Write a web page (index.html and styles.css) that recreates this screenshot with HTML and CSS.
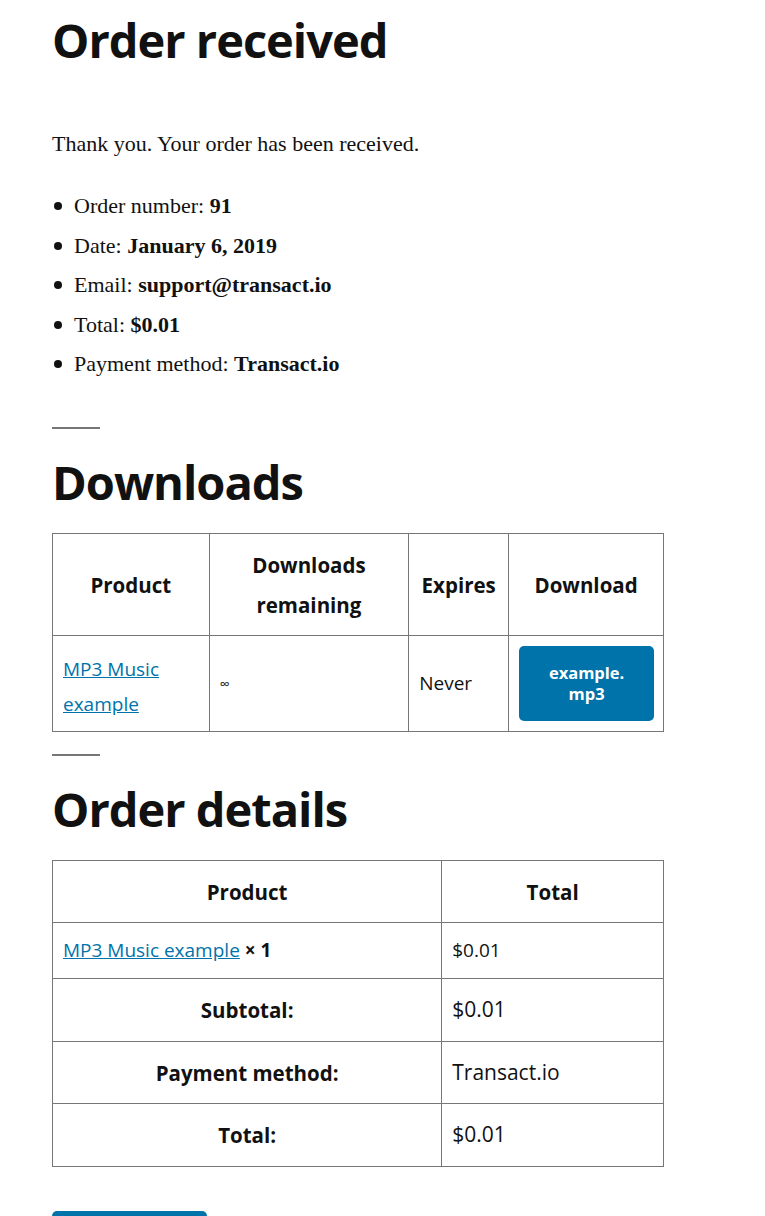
FILE: index.html
```html
<!DOCTYPE html>
<html lang="en">
<head>
<meta charset="utf-8">
<title>Order received</title>
<link rel="stylesheet" href="styles.css">
</head>
<body>
<main class="page">
  <h1 class="page-title">Order received</h1>
  <p class="thanks">Thank you. Your order has been received.</p>
  <ul class="overview">
    <li>Order number: <strong>91</strong></li>
    <li>Date: <strong>January 6, 2019</strong></li>
    <li>Email: <strong>support@transact.io</strong></li>
    <li>Total: <strong>$0.01</strong></li>
    <li>Payment method: <strong>Transact.io</strong></li>
  </ul>

  <hr class="sep sep-first">
  <h2 class="section-title">Downloads</h2>
  <table class="shop-table downloads">
    <colgroup>
      <col class="c-product"><col class="c-remaining"><col class="c-expires"><col class="c-download">
    </colgroup>
    <thead>
      <tr>
        <th>Product</th>
        <th>Downloads remaining</th>
        <th>Expires</th>
        <th>Download</th>
      </tr>
    </thead>
    <tbody>
      <tr>
        <td class="product-cell"><a href="#">MP3 Music example</a></td>
        <td class="infinity">∞</td>
        <td>Never</td>
        <td><a class="btn file-btn" href="#">example.<br>mp3</a></td>
      </tr>
    </tbody>
  </table>

  <hr class="sep">
  <h2 class="section-title">Order details</h2>
  <table class="shop-table details">
    <colgroup>
      <col class="c-name"><col class="c-total">
    </colgroup>
    <thead>
      <tr><th>Product</th><th>Total</th></tr>
    </thead>
    <tbody>
      <tr>
        <td><a href="#">MP3 Music example</a> <strong class="qty">× 1</strong></td>
        <td>$0.01</td>
      </tr>
    </tbody>
    <tfoot>
      <tr><th>Subtotal:</th><td>$0.01</td></tr>
      <tr><th>Payment method:</th><td>Transact.io</td></tr>
      <tr><th>Total:</th><td>$0.01</td></tr>
    </tfoot>
  </table>

  <div class="actions"><a class="btn again-btn" href="#">Order again</a></div>
</main>
</body>
</html>
```

FILE: styles.css
```css
html, body {
  margin: 0;
  padding: 0;
  background: #fff;
}

body {
  color: #111;
  font-family: "Liberation Serif", "Times New Roman", serif;
  font-size: 22px;
}

.page {
  width: 612px;
  padding: 0 0 0 52px;
}

.page-title,
.section-title {
  font-family: "Open Sans", "Noto Sans", sans-serif;
  font-weight: 700;
  color: #111;
  font-size: 47px;
  line-height: 64px;
  letter-spacing: -1px;
  margin: 0;
}

.page-title {
  padding-top: 8px;
}

.thanks {
  margin: 57px 0 0;
  line-height: 30px;
}

.overview {
  margin: 27px 0 0;
  padding: 0 0 0 22px;
  list-style: none;
}

.overview li {
  line-height: 39.5px;
}

.overview li::before {
  content: "";
  display: inline-block;
  width: 8px;
  height: 8px;
  border-radius: 50%;
  background: #111;
  margin-left: -20px;
  margin-right: 12px;
  vertical-align: 3px;
}

.overview strong {
  font-weight: 700;
}

.sep {
  width: 48px;
  height: 2px;
  margin: 0;
  border: 0;
  background: #767676;
}

.sep-first {
  margin-top: 43px;
}

.section-title {
  margin-top: 21px;
}

.shop-table {
  width: 612px;
  border-collapse: collapse;
  margin: 19px 0 22px;
  font-family: "Open Sans", "Noto Sans", sans-serif;
  font-size: 19px;
  color: #111;
}

.shop-table th,
.shop-table td {
  border: 1px solid #767676;
  padding: 11px 10px;
  vertical-align: middle;
}

.shop-table th {
  font-weight: 700;
  line-height: 40px;
  text-align: center;
  font-size: 20.5px;
  padding-bottom: 10px;
}

.shop-table td {
  line-height: 35px;
  text-align: left;
}

.downloads tbody td {
  padding-top: 10px;
  padding-bottom: 10px;
}

.downloads tbody .product-cell {
  padding-top: 14px;
  padding-bottom: 6px;
}

.shop-table a {
  color: #0073aa;
  text-decoration: underline;
}

.c-product { width: 157px; }
.c-remaining { width: 200px; }
.c-expires { width: 100px; }
.c-download { width: 155px; }

.c-name { width: 390px; }
.c-total { width: 222px; }

.infinity {
  font-size: 14px;
}

.btn {
  display: block;
  background: #0073aa;
  color: #fff !important;
  text-decoration: none !important;
  border-radius: 5px;
  font-family: "Open Sans", "Noto Sans", sans-serif;
  font-weight: 700;
  text-align: center;
}

.file-btn {
  font-size: 16.5px;
  line-height: 21px;
  padding: 16px 10px 17px;
  margin-right: -1px;
}

.details tbody td {
  line-height: 33px;
}

.details tfoot td {
  font-size: 21px;
}

.details tfoot th {
  padding-bottom: 11px;
}

.details tfoot tr:nth-child(2) th {
  padding-bottom: 10px;
}

.qty {
  font-weight: 700;
}

.details {
  margin-top: 19px;
}

.actions {
  margin-top: 44px;
}

.again-btn {
  display: inline-block;
  width: 155px;
  font-size: 18px;
  line-height: 40px;
  padding: 12px 0;
}
```
